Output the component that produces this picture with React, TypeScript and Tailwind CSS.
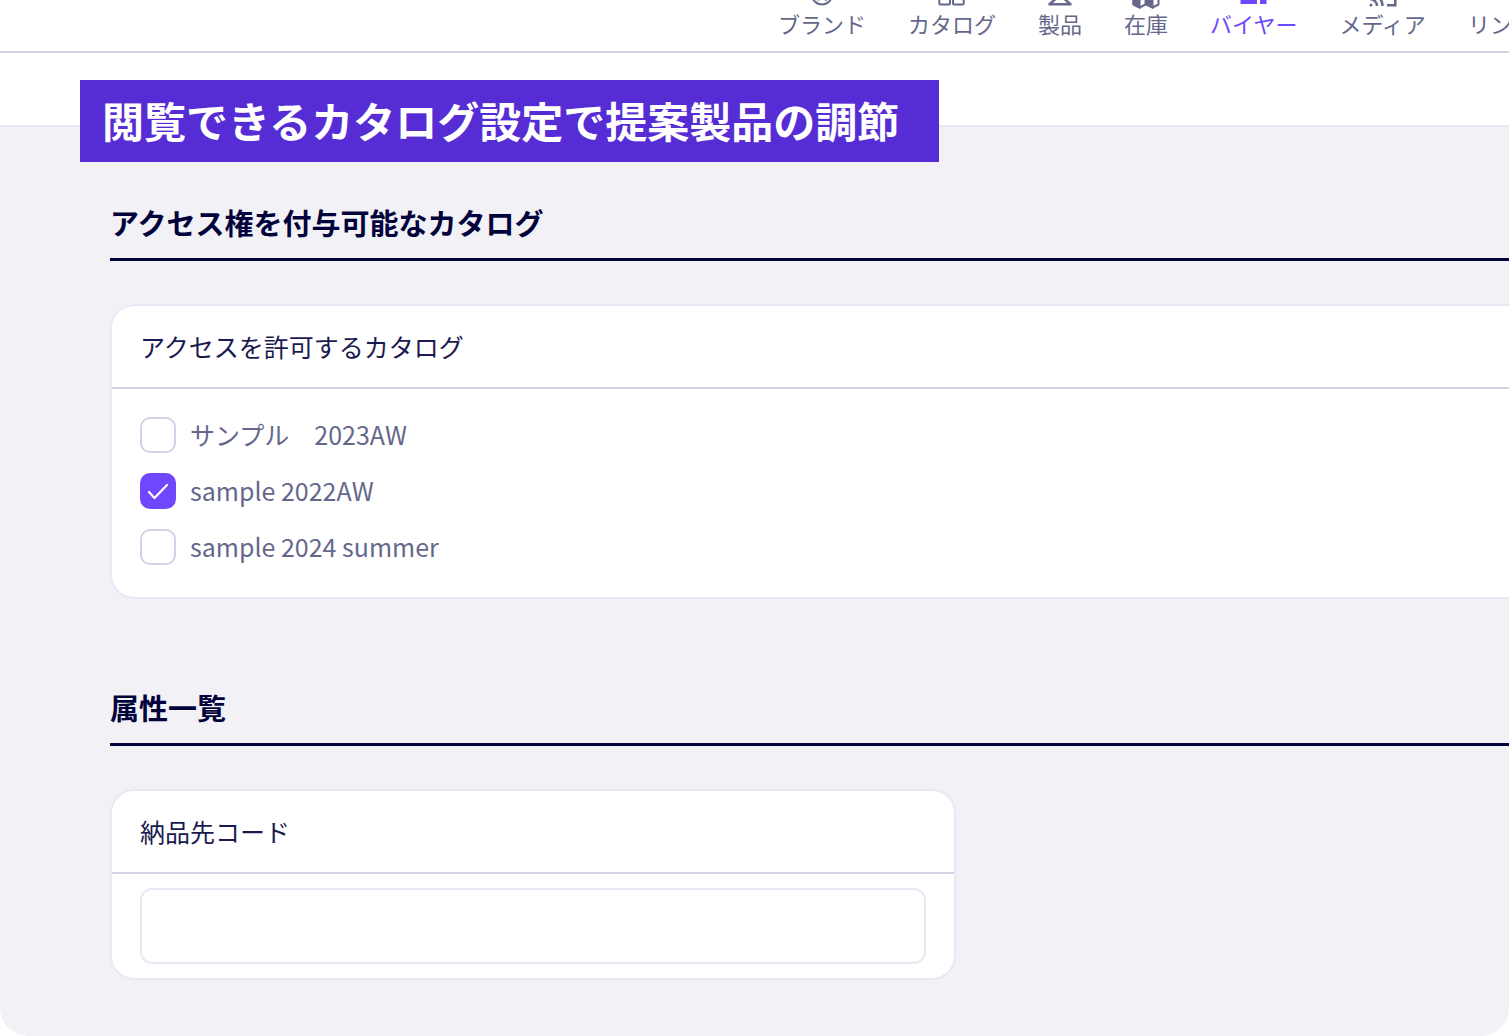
const headingClass =
  'border-b-3 border-[#03033b] pb-[15px] text-[29px] leading-[42px] font-bold text-[#03033b]';

const navItems = [
  { label: 'ブランド', icon: 'brand', active: false },
  { label: 'カタログ', icon: 'catalog', active: false },
  { label: '製品', icon: 'product', active: false },
  { label: '在庫', icon: 'stock', active: false },
  { label: 'バイヤー', icon: 'buyer', active: true },
  { label: 'メディア', icon: 'media', active: false },
  { label: 'リンク', icon: 'link', active: false },
];

const catalogs = [
  { label: 'サンプル　2023AW', checked: false },
  { label: 'sample 2022AW', checked: true },
  { label: 'sample 2024 summer', checked: false },
];

function NavIcon({ name }: { name: string }) {
  return (
    <svg
      viewBox="0 0 32 32"
      className="size-8 overflow-visible"
      fill="none"
      stroke="currentColor"
      strokeWidth="2"
      aria-hidden="true"
    >
      {name === 'brand' && (
        <>
          <circle cx="16" cy="19.500" r="10" />
          <path d="M12.500 25.500v-10h4a2.500 2.500 0 0 1 0 5.500h-4M16.500 21l4 4.500" />
        </>
      )}
      {name === 'catalog' && (
        <>
          <rect x="3.300" y="5.300" width="10.700" height="10.700" rx="1" />
          <rect x="17" y="5.300" width="10.700" height="10.700" rx="1" />
          <rect x="3.300" y="18.700" width="10.700" height="10.700" rx="1" />
          <rect x="17" y="18.700" width="10.700" height="10.700" rx="1" />
        </>
      )}
      {name === 'product' && (
        <path d="M13 12a3 3 0 1 1 4 3l-1 1v4L5.500 29.300h21L16 20" strokeWidth="2.500" strokeLinejoin="round" />
      )}
      {name === 'stock' && (
        <>
          <path d="M3.500 22.500v7l6 3 6-3v-7l-6-3zM16.500 22.500v7l6 3 6-3v-7l-6-3z" strokeLinejoin="round" />
          <path d="M3.500 22.500v7l6 3v-8zM16.500 22.500v7l6 3v-8z" fill="currentColor" />
        </>
      )}
      {name === 'buyer' && (
        <g fill="currentColor" stroke="none">
          <circle cx="10.500" cy="13" r="5.500" />
          <path d="M2.500 29v-3c0-7 16.500-7 16.500 0v3zM19.500 19.500c5 0 9 2 9 5.500v4h-6.500v-4c0-2.500-1-4-2.500-5.500z" />
        </g>
      )}
      {name === 'media' && (
        <>
          <path d="M3 14V9h25.300v21.300h-8.300" strokeWidth="2.500" />
          <path d="M3 24a7 7 0 0 1 7 7M3 18.500a12.500 12.500 0 0 1 12.500 12.500" strokeWidth="2.500" />
          <circle cx="4" cy="30" r="1.500" fill="currentColor" stroke="none" />
        </>
      )}
      {name === 'link' && <path d="M13 16l6-6M11 13l-3 3a3 3 0 0 0 5 5l3-3M16 8l3-3a3 3 0 0 1 5 5l-3 3" />}
    </svg>
  );
}

export default function App() {
  return (
    <div className="overflow-x-hidden bg-white pr-px font-['Noto_Sans_CJK_JP',sans-serif]">
      <div className="min-h-screen overflow-hidden rounded-b-[28px] bg-[#f2f1f6]">
        <header className="border-b-2 border-[#e9e8f4] bg-white">
          <nav className="flex h-[53px] flex-col justify-end overflow-hidden border-b-2 border-[#d2d2e7] pb-3 pl-[778px]">
            <ul className="flex gap-[42px]">
              {navItems.map((item) => (
                <li key={item.label} className="shrink-0">
                  <a
                    href="#"
                    className={`flex flex-col items-center text-[22px] leading-[32px] whitespace-nowrap ${item.active ? 'text-[#6e47ff]' : 'text-[#65688b]'}`}
                  >
                    <NavIcon name={item.icon} />
                    {item.label}
                  </a>
                </li>
              ))}
            </ul>
          </nav>
          <div className="h-[72px]" />
        </header>

        <main>
          <div className="relative -mt-[47px] ml-20 flex h-[82px] w-fit items-center bg-[#562dd4] pr-10 pb-[3px] pl-[22px]">
            <h1 className="text-[42px] leading-[60px] font-bold whitespace-nowrap text-white">
              閲覧できるカタログ設定で提案製品の調節
            </h1>
          </div>

          <section className="mt-[39px] ml-[110px]">
            <h2 className={headingClass}>アクセス権を付与可能なカタログ</h2>
            <fieldset className="mt-[43px] rounded-l-3xl border-2 border-r-0 border-[#e9e8f4] bg-white">
              <legend className="float-left w-full border-b-2 border-[#d2d2e7] px-7 pt-[19px] pb-5 text-[25px] leading-[42px] text-[#1a1a50]">
                アクセスを許可するカタログ
              </legend>
              <div className="clear-both flex flex-col gap-5 px-7 pt-7 pb-8">
                {catalogs.map((catalog) => (
                  <label
                    key={catalog.label}
                    className="flex h-9 w-fit items-center gap-[14px] text-[25px] leading-[34px] text-[#65688b]"
                  >
                    <span className="grid size-9 place-items-center">
                      <input
                        type="checkbox"
                        defaultChecked={catalog.checked}
                        className="peer col-start-1 row-start-1 size-9 appearance-none rounded-[10px] border-2 border-[#d2d2e7] bg-white checked:border-[#6e47ff] checked:bg-[#6e47ff]"
                      />
                      <svg
                        viewBox="0 0 36 36"
                        className="pointer-events-none invisible col-start-1 row-start-1 size-9 peer-checked:visible"
                        fill="none"
                        stroke="white"
                        strokeWidth="2.200"
                        strokeLinecap="round"
                        strokeLinejoin="round"
                        aria-hidden="true"
                      >
                        <path d="M9 19l5.500 6L27 12" />
                      </svg>
                    </span>
                    <span className="pb-0.5">{catalog.label}</span>
                  </label>
                ))}
              </div>
            </fieldset>
          </section>

          <section className="mt-[87px] ml-[110px]">
            <h2 className={headingClass}>属性一覧</h2>
            <div className="mt-[43px] mb-14 max-w-[846px] rounded-3xl border-2 border-[#e9e8f4] bg-white">
              <label
                htmlFor="delivery-code"
                className="block border-b-2 border-[#d2d2e7] px-7 pt-[19px] pb-5 text-[25px] leading-[42px] text-[#1a1a50]"
              >
                納品先コード
              </label>
              <div className="px-7 py-[14px]">
                <input
                  id="delivery-code"
                  type="text"
                  className="block h-[76px] w-full rounded-xl border-2 border-[#e9e8f4] bg-white px-4 text-[25px] text-[#1a1a50]"
                />
              </div>
            </div>
          </section>
        </main>
      </div>
    </div>
  );
}
